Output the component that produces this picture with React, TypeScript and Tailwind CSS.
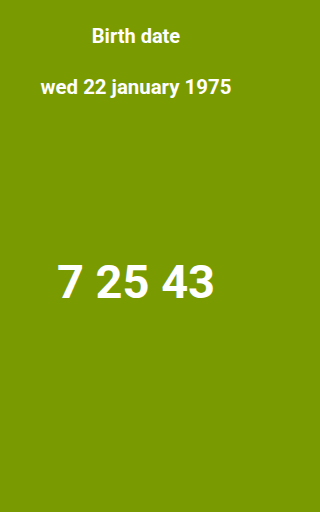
import React from 'react';

const App: React.FC = () => {
  return (
    <div className="min-h-screen w-full bg-[#7a9a01]">
      <div className="h-[512px] w-[272px] text-white font-['Roboto',sans-serif] flex flex-col items-center">
        {/* Header */}
        <h1 className="mt-[24px] text-[20px] leading-[24px] font-bold">Birth date</h1>
        <p className="mt-[27px] text-[20.4px] leading-[24px] font-bold">wed 22 january 1975</p>

        {/* Result */}
        <div className="flex-1 flex items-center justify-center pb-[48px]">
          <span className="text-[47px] leading-[56px] font-bold">7 25 43</span>
        </div>
      </div>
    </div>
  );
};

export default App;
